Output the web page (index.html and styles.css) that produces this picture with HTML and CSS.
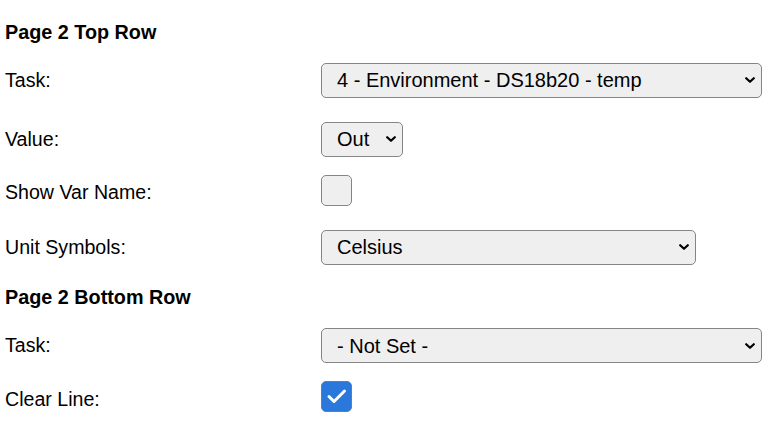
FILE: index.html
```
<!DOCTYPE html>
<html>
<head>
<meta charset="utf-8">
<title>Page 2</title>
<link rel="stylesheet" href="styles.css">
</head>
<body>
<div class="form">
  <div class="head">Page 2 Top Row</div>

  <div class="row m19">
    <label class="lbl">Task:</label>
    <div class="ctl"><select class="sel sel-task"><option>4 - Environment - DS18b20 - temp</option></select></div>
  </div>

  <div class="row m24">
    <label class="lbl">Value:</label>
    <div class="ctl"><select class="sel sel-out"><option>Out</option></select></div>
  </div>

  <div class="row m18">
    <label class="lbl lbl-cb">Show Var Name:</label>
    <div class="ctl"><span class="cbx"><input type="checkbox" class="cb"></span></div>
  </div>

  <div class="row m24">
    <label class="lbl">Unit Symbols:</label>
    <div class="ctl"><select class="sel sel-unit"><option>Celsius</option></select></div>
  </div>

  <div class="head m21">Page 2 Bottom Row</div>

  <div class="row m20">
    <label class="lbl">Task:</label>
    <div class="ctl"><select class="sel sel-task"><option>- Not Set -</option></select></div>
  </div>

  <div class="row m18">
    <label class="lbl lbl-cb">Clear Line:</label>
    <div class="ctl"><span class="cbx checked"><input type="checkbox" class="cb" checked><svg class="tick" viewBox="0 0 31 31" width="31" height="31"><polyline points="8,15.5 13,20.5 23.5,10" fill="none" stroke="#fff" stroke-width="3" stroke-linecap="round" stroke-linejoin="round"/></svg></span></div>
  </div>
</div>
</body>
</html>
```
FILE: styles.css
```
html, body {
  margin: 0;
  padding: 0;
  background: #fff;
}

body {
  font-family: "Liberation Sans", Arial, sans-serif;
  color: #000;
}

.form {
  display: flex;
  flex-direction: column;
  padding: 21px 0 0 5px;
}

.head {
  font-weight: bold;
  font-size: 19.8px;
  line-height: 23px;
}

.row {
  display: grid;
  grid-template-columns: 316px auto;
  align-items: center;
}

.m18 { margin-top: 18px; }
.m19 { margin-top: 18.5px; }
.m20 { margin-top: 19.5px; }
.m21 { margin-top: 21px; }
.m24 { margin-top: 24px; }

.lbl {
  font-size: 19.6px;
  line-height: 23px;
}

.lbl-cb {
  padding-top: 5px;
}

.ctl {
  display: flex;
  align-items: center;
}

.sel {
  -webkit-appearance: none;
  appearance: none;
  box-sizing: border-box;
  height: 35px;
  margin: 0;
  padding: 0 26px 0 15px;
  font-family: "Liberation Sans", Arial, sans-serif;
  font-size: 20px;
  color: #000;
  background-color: #efefef;
  background-image: url("data:image/svg+xml,%3Csvg xmlns='http://www.w3.org/2000/svg' viewBox='0 0 10 6'%3E%3Cpath d='M1.2 1.2 L5 4.8 L8.8 1.2' fill='none' stroke='%23000' stroke-width='2.2' stroke-linecap='round' stroke-linejoin='round'/%3E%3C/svg%3E");
  background-repeat: no-repeat;
  background-position: right 6px center;
  background-size: 10px 6px;
  border: 1px solid #858585;
  border-radius: 5px;
}

.sel-task { width: 441px; }
.sel-out { width: 82px; }
.sel-unit { width: 375px; }

.cbx {
  position: relative;
  display: inline-block;
  width: 31px;
  height: 31px;
}

.cb {
  -webkit-appearance: none;
  appearance: none;
  display: block;
  box-sizing: border-box;
  width: 31px;
  height: 31px;
  margin: 0;
  background: #efefef;
  border: 1px solid #858585;
  border-radius: 5px;
}

.cb:checked {
  background: #2b78dc;
  border-color: #5d7fae;
}

.tick {
  position: absolute;
  left: 0;
  top: 0;
  pointer-events: none;
}
```
